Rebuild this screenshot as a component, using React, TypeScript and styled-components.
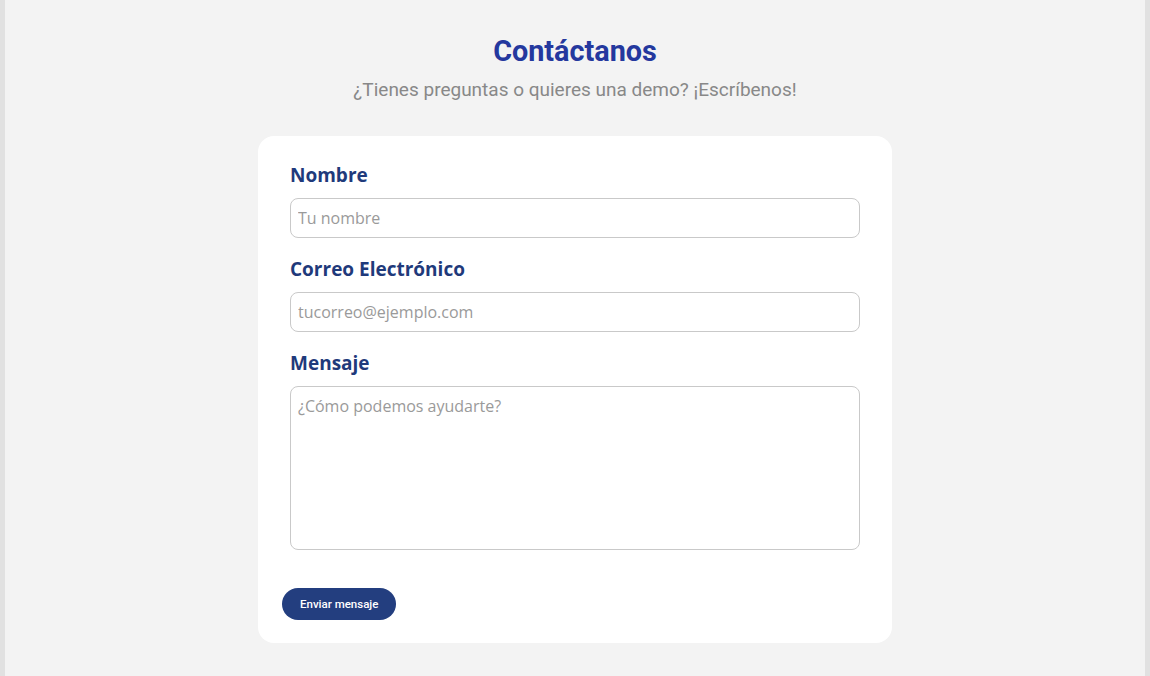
import React from "react";
import styled, { createGlobalStyle } from "styled-components";

const GlobalStyle = createGlobalStyle`
  html, body {
    margin: 0;
    padding: 0;
    background: #f3f3f3;
  }
  * { box-sizing: border-box; }
`;

const Page = styled.main`
  min-height: 100vh;
  background: #f3f3f3;
  border-left: 5px solid #e1e1e1;
  border-right: 5px solid #e1e1e1;
  padding: 34px 0 33px;
  display: flex;
  flex-direction: column;
  align-items: center;
`;

const Title = styled.h1`
  margin: 0;
  font-family: Roboto, "Liberation Sans", sans-serif;
  font-weight: 700;
  font-size: 28.8px;
  line-height: 34px;
  color: #24389e;
  text-align: center;
`;

const Subtitle = styled.p`
  margin: 11px 0 35px;
  font-family: Roboto, "Liberation Sans", sans-serif;
  font-weight: 400;
  font-size: 19px;
  line-height: 22px;
  color: #888888;
  text-align: center;
`;

const Card = styled.form`
  width: 634px;
  background: #ffffff;
  border-radius: 16px;
  padding: 26px 24px 23px;
  display: flex;
  flex-direction: column;
`;

const Field = styled.div<{ $last?: boolean }>`
  display: flex;
  flex-direction: column;
  margin: 0 8px ${(p) => (p.$last ? "0" : "18px")};
`;

const Label = styled.label`
  font-family: "Open Sans", "Liberation Sans", sans-serif;
  font-weight: 700;
  font-size: 19px;
  line-height: 26px;
  color: #1f3a7b;
  margin: 0 0 10px;
`;

const inputBase = `
  width: 100%;
  border: 1px solid #c9c9c9;
  border-radius: 8px;
  background: #fff;
  font-family: "Open Sans", "Liberation Sans", sans-serif;
  font-size: 16px;
  color: #333;
  outline: none;
  &::placeholder { color: #9a9a9a; }
`;

const Input = styled.input`
  ${inputBase}
  height: 40px;
  padding: 0 7px;
`;

const TextArea = styled.textarea`
  ${inputBase}
  height: 164px;
  padding: 8px 7px;
  line-height: 22px;
  resize: none;
`;

const Actions = styled.div`
  margin-top: 38px;
  display: flex;
`;

const SubmitButton = styled.button`
  height: 32px;
  padding: 0 18px;
  border: none;
  border-radius: 16px;
  background: #233e7f;
  color: #ffffff;
  font-family: Roboto, "Liberation Sans", sans-serif;
  font-weight: 500;
  font-size: 11.5px;
  cursor: pointer;
`;

export default function App() {
  return (
    <>
      <GlobalStyle />
      <Page>
        <Title>Contáctanos</Title>
        <Subtitle>¿Tienes preguntas o quieres una demo? ¡Escríbenos!</Subtitle>
        <Card onSubmit={(e) => e.preventDefault()}>
          <Field>
            <Label htmlFor="nombre">Nombre</Label>
            <Input id="nombre" type="text" placeholder="Tu nombre" />
          </Field>
          <Field>
            <Label htmlFor="correo">Correo Electrónico</Label>
            <Input id="correo" type="email" placeholder="tucorreo@ejemplo.com" />
          </Field>
          <Field $last>
            <Label htmlFor="mensaje">Mensaje</Label>
            <TextArea id="mensaje" placeholder="¿Cómo podemos ayudarte?" />
          </Field>
          <Actions>
            <SubmitButton type="submit">Enviar mensaje</SubmitButton>
          </Actions>
        </Card>
      </Page>
    </>
  );
}
